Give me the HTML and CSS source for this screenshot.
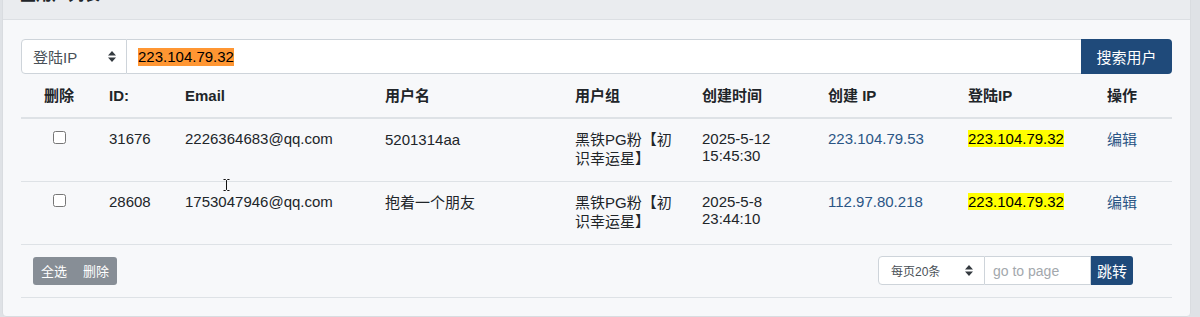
FILE: index.html
```html
<!DOCTYPE html>
<html lang="zh-CN">
<head>
    <meta charset="UTF-8">
    <meta name="viewport" content="width=device-width, initial-scale=1.0">
    <title>用户列表</title>
    <link rel="stylesheet" href="styles.css">
</head>
<body>
    <div class="card">
        <div class="card-header">查用户列表</div>
        <div class="card-body">
            <!-- Search bar -->
            <form class="search-bar" onsubmit="return false">
                <div class="fake-select search-select">
                    <span>登陆IP</span>
                    <svg class="select-arrows" width="8" height="11" viewBox="0 0 8 11"><path d="M4 0L8 4.5H0Z M4 11L0 6.5H8Z"/></svg>
                </div>
                <div class="search-input"><span class="find-active">223.104.79.32</span></div>
                <button class="btn-primary search-btn">搜索用户</button>
            </form>

            <table class="user-table">
                <colgroup>
                    <col style="width:76px"><col style="width:76px"><col style="width:200px">
                    <col style="width:190px"><col style="width:127px"><col style="width:126px">
                    <col style="width:140px"><col style="width:139px"><col style="width:77px">
                </colgroup>
                <thead>
                    <tr>
                        <th class="center">删除</th>
                        <th>ID:</th>
                        <th>Email</th>
                        <th>用户名</th>
                        <th>用户组</th>
                        <th>创建时间</th>
                        <th>创建 IP</th>
                        <th>登陆IP</th>
                        <th>操作</th>
                    </tr>
                </thead>
                <tbody>
                    <tr>
                        <td class="center"><input type="checkbox"></td>
                        <td>31676</td>
                        <td>2226364683@qq.com</td>
                        <td class="cjk">5201314aa</td>
                        <td class="cjk">黑铁PG粉【初识幸运星】</td>
                        <td>2025-5-12 15:45:30</td>
                        <td><a href="#">223.104.79.53</a></td>
                        <td><span class="find-match">223.104.79.32</span></td>
                        <td class="cjk"><a href="#">编辑</a></td>
                    </tr>
                    <tr>
                        <td class="center"><input type="checkbox"></td>
                        <td>28608</td>
                        <td>1753047946@qq.com</td>
                        <td class="cjk">抱着一个朋友</td>
                        <td class="cjk">黑铁PG粉【初识幸运星】</td>
                        <td>2025-5-8 23:44:10</td>
                        <td><a href="#">112.97.80.218</a></td>
                        <td><span class="find-match">223.104.79.32</span></td>
                        <td class="cjk"><a href="#">编辑</a></td>
                    </tr>
                </tbody>
            </table>

            <div class="table-footer">
                <div class="btn-group">
                    <button class="btn-gray">全选</button>
                    <button class="btn-gray">删除</button>
                </div>
                <div class="pager">
                    <div class="fake-select pager-select">
                        <span>每页20条</span>
                        <svg class="select-arrows" width="8" height="11" viewBox="0 0 8 11"><path d="M4 0L8 4.5H0Z M4 11L0 6.5H8Z"/></svg>
                    </div>
                    <input class="pager-input" type="text" placeholder="go to page">
                    <button class="btn-primary pager-btn">跳转</button>
                </div>
            </div>
        </div>
    </div>

    <!-- mouse cursor in the shot -->
    <svg class="cursor" width="7" height="12" viewBox="0 0 7 12"><path d="M0.5 0.5H2.5L3.5 1.5L4.5 0.5H6.5 M3.5 1.5V10.5 M0.5 11.5H2.5L3.5 10.5L4.5 11.5H6.5" fill="none" stroke="#111" stroke-width="1"/></svg>
</body>
</html>
```

FILE: styles.css
```css
/* General */
body {
    margin: 0;
    background: #dfe2e6;
    font-family: "Liberation Sans", "Noto Sans CJK SC", sans-serif;
    font-size: 15px;
    color: #212529;
    overflow: hidden;
}

.card {
    margin: -30px 9px 0 2px;
    background: #f7f8fa;
    border: 1px solid #d9dce0;
    border-radius: 4px;
}

.card-header {
    background: #eaecef;
    border-bottom: 1px solid #dcdfe3;
    padding: 12px 17px;
    font-size: 16px;
    font-weight: bold;
    line-height: 24px;
}

.card-body {
    padding: 19px 18px 18px;
}

/* Search bar */
.search-bar {
    display: flex;
    height: 35px;
    margin: 0;
}

.fake-select {
    display: flex;
    align-items: center;
    justify-content: space-between;
    background: #fff;
    border: 1px solid #ced4da;
    border-radius: 4px 0 0 4px;
    color: #495057;
    box-sizing: border-box;
}

.select-arrows {
    fill: #343a40;
}

.search-select {
    width: 106px;
    padding: 0 10px 0 11px;
}

.search-input {
    flex: 1;
    display: flex;
    align-items: center;
    background: #fff;
    border-top: 1px solid #ced4da;
    border-bottom: 1px solid #ced4da;
    padding-left: 11px;
    color: #000;
}

.find-active {
    background: #ff9632;
    line-height: 18px;
}

.find-match {
    background: #ffff00;
    color: #000;
}

.btn-primary {
    background: #1f4a7a;
    color: #fff;
    border: 0;
    font-family: inherit;
    cursor: pointer;
}

.search-btn {
    width: 91px;
    font-size: 15px;
    border-radius: 0 4px 4px 0;
}

/* Table */
.user-table {
    width: 100%;
    border-collapse: collapse;
    table-layout: fixed;
    line-height: 17.25px;
}

.user-table th,
.user-table td {
    padding: 11px 12px 13px;
    text-align: left;
    vertical-align: top;
}

.user-table th {
    font-weight: bold;
    line-height: 19px;
    padding: 12px;
    border-bottom: 2px solid #dee2e6;
}

.user-table td {
    border-top: 1px solid #dee2e6;
    border-bottom: 1px solid #dee2e6;
}

.user-table td.cjk {
    line-height: 19px;
}

.user-table .center {
    text-align: center;
}

.user-table input[type="checkbox"] {
    display: block;
    margin: 1px auto 0;
}

.user-table a {
    color: #2a5585;
    text-decoration: none;
}

/* Footer */
.table-footer {
    display: flex;
    justify-content: space-between;
    align-items: center;
    padding: 11px 39px 12px 12px;
    border-bottom: 1px solid #dee2e6;
}

.btn-group {
    display: flex;
    background: #878e96;
    border-radius: 3px;
}

.btn-gray {
    background: transparent;
    border: 0;
    color: #fff;
    font-family: inherit;
    font-size: 13px;
    height: 28px;
    padding: 0 8px;
}

.pager {
    display: flex;
    height: 29px;
}

.pager-select {
    width: 107px;
    padding: 0 11px 0 12px;
    font-size: 12px;
}

.pager-input {
    width: 106px;
    box-sizing: border-box;
    border: 1px solid #ced4da;
    border-left: 0;
    padding: 0 8px;
    font-family: inherit;
    font-size: 14px;
    outline: none;
}

.pager-input::placeholder {
    color: #a3a8ad;
}

.pager-btn {
    width: 42px;
    font-size: 15px;
    border-radius: 0 3px 3px 0;
}

.cursor {
    position: absolute;
    left: 223px;
    top: 179px;
}
```
